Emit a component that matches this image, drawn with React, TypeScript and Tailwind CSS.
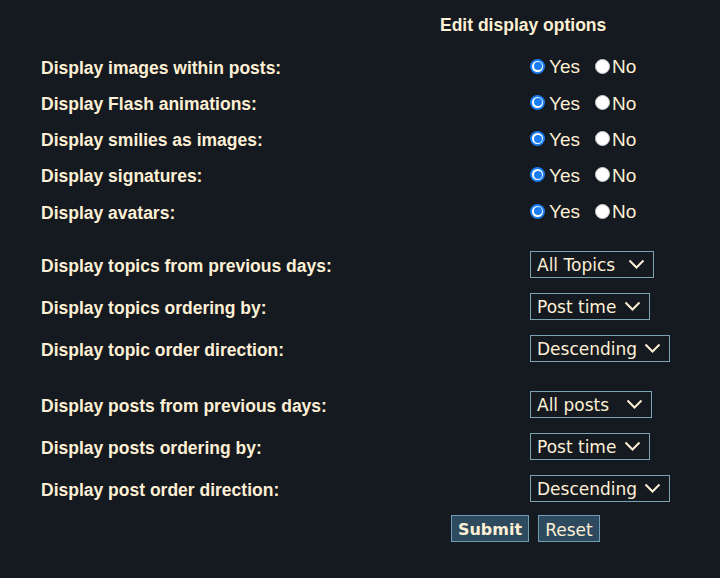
import React from 'react';

const radioRows = [
  'Display images within posts:',
  'Display Flash animations:',
  'Display smilies as images:',
  'Display signatures:',
  'Display avatars:',
];

const topicRows = [
  { label: 'Display topics from previous days:', value: 'All Topics', w: 'w-[124px]' },
  { label: 'Display topics ordering by:', value: 'Post time', w: 'w-[120px]' },
  { label: 'Display topic order direction:', value: 'Descending', w: 'w-[140px]' },
];

const postRows = [
  { label: 'Display posts from previous days:', value: 'All posts', w: 'w-[122px]' },
  { label: 'Display posts ordering by:', value: 'Post time', w: 'w-[120px]' },
  { label: 'Display post order direction:', value: 'Descending', w: 'w-[140px]' },
];

function Radio({ checked }: { checked: boolean }) {
  if (checked) {
    return (
      <span className="w-[15px] h-[15px] shrink-0 rounded-full bg-[#1a7df2] flex items-center justify-center">
        <span className="w-[11px] h-[11px] rounded-full bg-white flex items-center justify-center">
          <span className="w-[8px] h-[8px] rounded-full bg-[#1a7df2]" />
        </span>
      </span>
    );
  }
  return <span className="block w-[15px] h-[15px] shrink-0 rounded-full bg-white border border-[#c8c8c8]" />;
}

function Label({ children }: { children: React.ReactNode }) {
  return (
    <div className="w-[530px] pl-[41px] pt-[3px] font-['Liberation_Sans',Arial,sans-serif] font-bold text-[17.5px]">
      {children}
    </div>
  );
}

function Select({ value, w }: { value: string; w: string }) {
  return (
    <div
      className={`${w} h-[27px] border border-[#7ba3b3] flex items-center justify-between pl-[6px] pr-[8px] font-['DejaVu_Sans',sans-serif] text-[17px]`}
    >
      <span className="leading-none pt-[3px]">{value}</span>
      <svg width="17" height="10" viewBox="0 0 17 10" fill="none">
        <polyline points="1.5,1.5 8.5,8.5 15.5,1.5" stroke="#fdf0d5" strokeWidth="2" />
      </svg>
    </div>
  );
}

export default function App() {
  return (
    <div className="w-[720px] h-[578px] bg-[#151920] text-[#fdf0d5] overflow-hidden">
      <div className="pt-[14px] pl-[440px] font-['Liberation_Sans',Arial,sans-serif] font-bold text-[17.5px] leading-[22px]">
        Edit display options
      </div>

      <div className="mt-[12px]">
        {radioRows.map((label) => (
          <div key={label} className="h-[36.25px] flex items-center">
            <Label>{label}</Label>
            <div className="flex items-center font-['Liberation_Sans',Arial,sans-serif] text-[19px]">
              <Radio checked />
              <span className="ml-[4px] mt-[3px]">Yes</span>
              <span className="ml-[15px] block">
                <Radio checked={false} />
              </span>
              <span className="ml-[2px] mt-[3px]">No</span>
            </div>
          </div>
        ))}
      </div>

      <div className="mt-[14px]">
        {topicRows.map((r) => (
          <div key={r.label} className="h-[42px] flex items-center">
            <Label>{r.label}</Label>
            <Select value={r.value} w={r.w} />
          </div>
        ))}
      </div>

      <div className="mt-[14px]">
        {postRows.map((r) => (
          <div key={r.label} className="h-[42px] flex items-center">
            <Label>{r.label}</Label>
            <Select value={r.value} w={r.w} />
          </div>
        ))}
      </div>

      <div className="mt-[6px] pl-[451px] flex gap-[9px] font-['DejaVu_Sans',sans-serif]">
        <button className="w-[78px] h-[27px] pt-[3px] bg-[#2e4a5f] border border-[#6e9db5] text-[#fdf0d5] font-bold text-[16px] leading-none">
          Submit
        </button>
        <button className="w-[62px] h-[27px] pt-[3px] bg-[#2e4a5f] border border-[#6e9db5] text-[#fdf0d5] text-[17px] leading-none">
          Reset
        </button>
      </div>
    </div>
  );
}
